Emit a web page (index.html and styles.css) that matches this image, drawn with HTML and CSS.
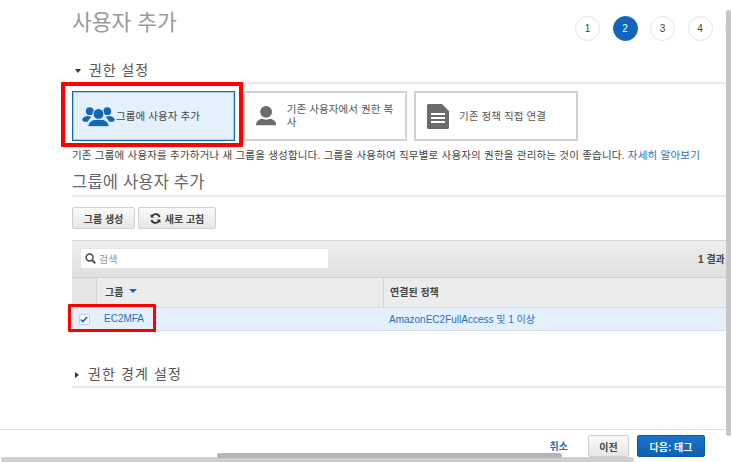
FILE: index.html
```html
<!DOCTYPE html>
<html lang="ko">
<head>
<meta charset="utf-8">
<title>사용자 추가</title>
<link rel="stylesheet" href="styles.css">
</head>
<body>
<div class="page">
  <header class="top">
    <h1 class="title">사용자 추가</h1>
    <ol class="steps">
      <li class="step">1</li>
      <li class="step current">2</li>
      <li class="step">3</li>
      <li class="step">4</li>
      <li class="step">5</li>
    </ol>
  </header>

  <h2 class="section first"><span class="tri down"></span>권한 설정</h2>

  <div class="cards">
    <div class="card selected">
      <svg class="ic-group" viewBox="0 0 34 22" width="33" height="22"><g fill="#1166bb"><circle cx="8" cy="6" r="4"/><circle cx="26" cy="6" r="4"/><path d="M0 15c1-3 4-4 6-4l4 1c-2 1-3 3-4 5H2z"/><path d="M34 15c-1-3-4-4-6-4l-4 1c2 1 3 3 4 5h4z"/></g><circle cx="17" cy="9" r="5.600" fill="#1166bb" stroke="#e4f1fc"/><path d="M6 22c0-4 4-7 7-7.500h8c3 .5 7 3.500 7 7.500z" fill="#1166bb" stroke="#e4f1fc"/></svg>
      <span class="card-text">그룹에 사용자 추가</span>
    </div>
    <div class="card">
      <svg class="ic-user" viewBox="0 0 22 22" width="22" height="22"><circle cx="11" cy="6.500" r="6.500" fill="#6b6b6b"/><path d="M0 21c0-4 3-6 6-7l5 1 5-1c3 1 6 3 6 7z" fill="#6b6b6b"/></svg>
      <span class="card-text">기존 사용자에서 권한 복사</span>
    </div>
    <div class="card">
      <svg class="ic-doc" viewBox="0 0 22 25" width="22" height="25"><path d="M1.500 0H15l7 7v16.500a1.500 1.500 0 0 1-1.500 1.500h-19A1.500 1.500 0 0 1 0 23.500v-22A1.500 1.500 0 0 1 1.500 0z" fill="#6b6b6b"/><path d="M4 9h14v2H4zM4 13h14v2H4zM4 17h14v2H4z" fill="#fff"/></svg>
      <span class="card-text">기존 정책 직접 연결</span>
    </div>
  </div>

  <p class="desc">기존 그룹에 사용자를 추가하거나 새 그룹을 생성합니다. 그룹을 사용하여 직무별로 사용자의 권한을 관리하는 것이 좋습니다. <a class="link" href="#">자세히 알아보기</a></p>

  <h2 class="section second">그룹에 사용자 추가</h2>

  <div class="actions">
    <button class="btn create">그룹 생성</button>
    <button class="btn refresh"><svg viewBox="0 0 12 12" width="11" height="11"><path d="M10.500 4.500A4.700 4.700 0 0 0 2 3.600" fill="none" stroke="#333" stroke-width="1.900"/><path d="M0.700 1v4h4z" fill="#333"/><path d="M1.500 7.500A4.700 4.700 0 0 0 10 8.400" fill="none" stroke="#333" stroke-width="1.900"/><path d="M11.300 11V7h-4z" fill="#333"/></svg>새로 고침</button>
  </div>

  <div class="table">
    <div class="toolbar">
      <div class="search">
        <svg viewBox="0 0 12 12" width="11" height="11"><circle cx="5" cy="5" r="3.800" fill="none" stroke="#444" stroke-width="1.600"/><path d="M8 8l3.200 3.200" stroke="#444" stroke-width="2"/></svg>
        <span class="placeholder">검색</span>
      </div>
      <span class="count">1 결과 표시</span>
    </div>
    <div class="thead">
      <div class="col-check"></div>
      <div class="col-group">그룹 <span class="sort"></span></div>
      <div class="col-policy">연결된 정책</div>
    </div>
    <div class="trow">
      <div class="col-check"><span class="checkbox"><svg viewBox="0 0 10 8" width="8" height="7"><path d="M1 4l2.500 2.500L9 1" fill="none" stroke="#1166bb" stroke-width="2"/></svg></span></div>
      <div class="col-group"><a class="link" href="#">EC2MFA</a></div>
      <div class="col-policy"><a class="link" href="#">AmazonEC2FullAccess 및 1 이상</a></div>
    </div>
  </div>

  <h2 class="section third"><span class="tri right"></span>권한 경계 설정</h2>

  <footer class="footer">
    <a class="link cancel" href="#">취소</a>
    <button class="btn prev">이전</button>
    <button class="btn next">다음: 태그</button>
  </footer>
</div>

<div class="mark mark-card"></div>
<div class="mark mark-row"></div>
<div class="vscroll"></div>
<div class="hscroll outer"></div>
<div class="hscroll inner"></div>
</body>
</html>
```

FILE: styles.css
```css
* { box-sizing: border-box; }
html, body { margin: 0; height: 100%; overflow: hidden; background: #fff; }
body {
  font-family: "Liberation Sans", "Noto Sans CJK KR", sans-serif;
  font-size: 10px;
  color: #444;
}
.page { width: 754px; height: 462px; padding-left: 72px; }
.top { display: flex; height: 42px; position: relative; }
.title { margin: 11px 0 0; font-size: 21.500px; line-height: 24px; font-weight: 400; color: #9a9a9a; width: 503px; flex: none; }
.steps { list-style: none; margin: 16px 0 0; padding: 0; display: flex; gap: 12.500px; }
.step {
  width: 25px; height: 25px; border-radius: 50%; border: 1px solid #e5e5e5;
  display: flex; align-items: center; justify-content: center; font-size: 10px; color: #444; flex: none;
}
.step.current { background: #1166bb; border-color: #1166bb; color: #fff; }
.section {
  margin: 0; font-weight: 400; font-size: 14px; line-height: 20px; color: #555;
  border-bottom: 2px solid #eaeaea; display: flex; align-items: center; letter-spacing: .9px;
}
.section.first { margin-top: 18px; height: 24px; padding-bottom: 2px; }
.section.second { margin-top: 11px; height: 24px; padding-bottom: 5px; font-size: 16.500px; color: #666; letter-spacing: .2px; }
.section.third { margin-top: 32px; height: 25px; padding-bottom: 1px; letter-spacing: 1.100px; }
.tri { width: 0; height: 0; border-style: solid; margin: 2px 8px 0 3px; }
.tri.down { border-width: 4px 3.500px 0; border-color: #333 transparent transparent; }
.tri.right { border-width: 3.500px 0 3.500px 4px; border-color: transparent transparent transparent #333; margin-right: 9px; }
.cards { display: flex; gap: 7.500px; margin-top: 7px; }
.card {
  width: 164px; height: 50px; border: 2px solid #d2d2d2; display: flex; align-items: center;
  padding: 0 11px; gap: 10px; background: #fff; flex: none;
}
.card.selected {
  width: 163px; background: #e4f1fc; border: 1px solid #1166bb; box-shadow: inset 0 0 0 1px rgba(17, 102, 187, .25);
  padding: 0 9px; gap: 1px;
}
.ic-user { margin-right: 1px; }
.card-text { font-size: 10.500px; line-height: 13px; color: #555; letter-spacing: .1px; }
.card.selected .card-text { color: #444; }
.desc { margin: 7px 0 0; width: 640px; font-size: 10.500px; line-height: 14px; color: #444; white-space: nowrap; letter-spacing: .2px; }
.link { color: #2a6fc0; text-decoration: none; }
.actions { display: flex; gap: 3px; margin-top: 10px; }
.btn {
  font: inherit; font-size: 10px; font-weight: 700; color: #444; height: 22px; padding: 0;
  border: 1px solid #cfcfcf; border-radius: 2px; background: linear-gradient(#fafafa, #e6e6e6);
  display: flex; align-items: center; justify-content: center; gap: 4px;
}
.btn.create { width: 63px; }
.btn.refresh { width: 78px; }
.table { margin-top: 11px; }
.toolbar {
  height: 37px; background: linear-gradient(#eeeeee, #e0e0e0); border-top: 1px solid #d5d5d5;
  display: flex; align-items: center; padding: 0 8px 2px; justify-content: space-between;
}
.search {
  width: 249px; height: 21px; background: #fff; border-radius: 2px; border: 1px solid #e6e6e6;
  display: flex; align-items: center; padding-left: 4px; gap: 3px;
}
.placeholder { color: #999; font-size: 10px; }
.count { font-size: 10px; font-weight: 700; color: #444; }
.thead {
  height: 30px; display: flex; background: #ececec; border-top: 1px solid #d0d0d0; font-weight: 700; color: #444;
}
.thead .col-group, .thead .col-policy { padding-bottom: 3px; }
.trow { height: 24px; display: flex; background: #e4f1fc; border-top: 1px solid #dcdcdc; border-bottom: 1px solid #d5dde4; font-size: 10px; }
.trow .col-group, .trow .col-policy { padding-bottom: 2px; }
.col-check { width: 24px; flex: none; display: flex; align-items: center; justify-content: center; }
.col-group { width: 287px; flex: none; display: flex; align-items: center; padding-left: 8px; gap: 5px; }
.col-policy { flex: 1; display: flex; align-items: center; padding-left: 6px; }
.thead .col-check { background: #e6e6e6; }
.thead .col-group, .thead .col-policy { border-left: 1px solid #d5d5d5; }
.sort { width: 0; height: 0; border-style: solid; border-width: 4px 4px 0; border-color: #1166bb transparent transparent; margin-left: 1px; }
.checkbox {
  width: 11px; height: 11px; background: #fff; border: 1px solid #ccd; border-radius: 2px;
  display: flex; align-items: center; justify-content: center;
}
.footer {
  position: fixed; left: 0; right: 0; bottom: 0; height: 33px; border-top: 1px solid #e2e2e2;
  display: flex; align-items: flex-start; justify-content: flex-end; padding: 5px 26px 0 0; background: #fff;
}
.cancel { font-size: 10px; font-weight: 700; margin: 3px 20px 0 0; }
.btn.prev { width: 41px; margin-right: 8px; }
.btn.next { width: 68px; background: linear-gradient(#1a74cc, #0f5fae); border-color: #0e5aa5; color: #fff; }
.mark { position: fixed; border: 3px solid #f00; border-radius: 1px; }
.mark-card { left: 61px; top: 82px; width: 182px; height: 65px; border-width: 4px; }
.mark-row { left: 68px; top: 304px; width: 88px; height: 28px; }
.vscroll { position: fixed; left: 726px; top: 10px; width: 5px; height: 426px; background: #c6c6c6; border-radius: 2px; }
.hscroll { position: fixed; border-radius: 3px; }
.hscroll.outer { left: 1px; top: 457px; width: 633px; height: 5px; background: #cfcfcf; }
.hscroll.inner { left: 217px; top: 453px; width: 345px; height: 5px; background: #b4b4b4; }
```
